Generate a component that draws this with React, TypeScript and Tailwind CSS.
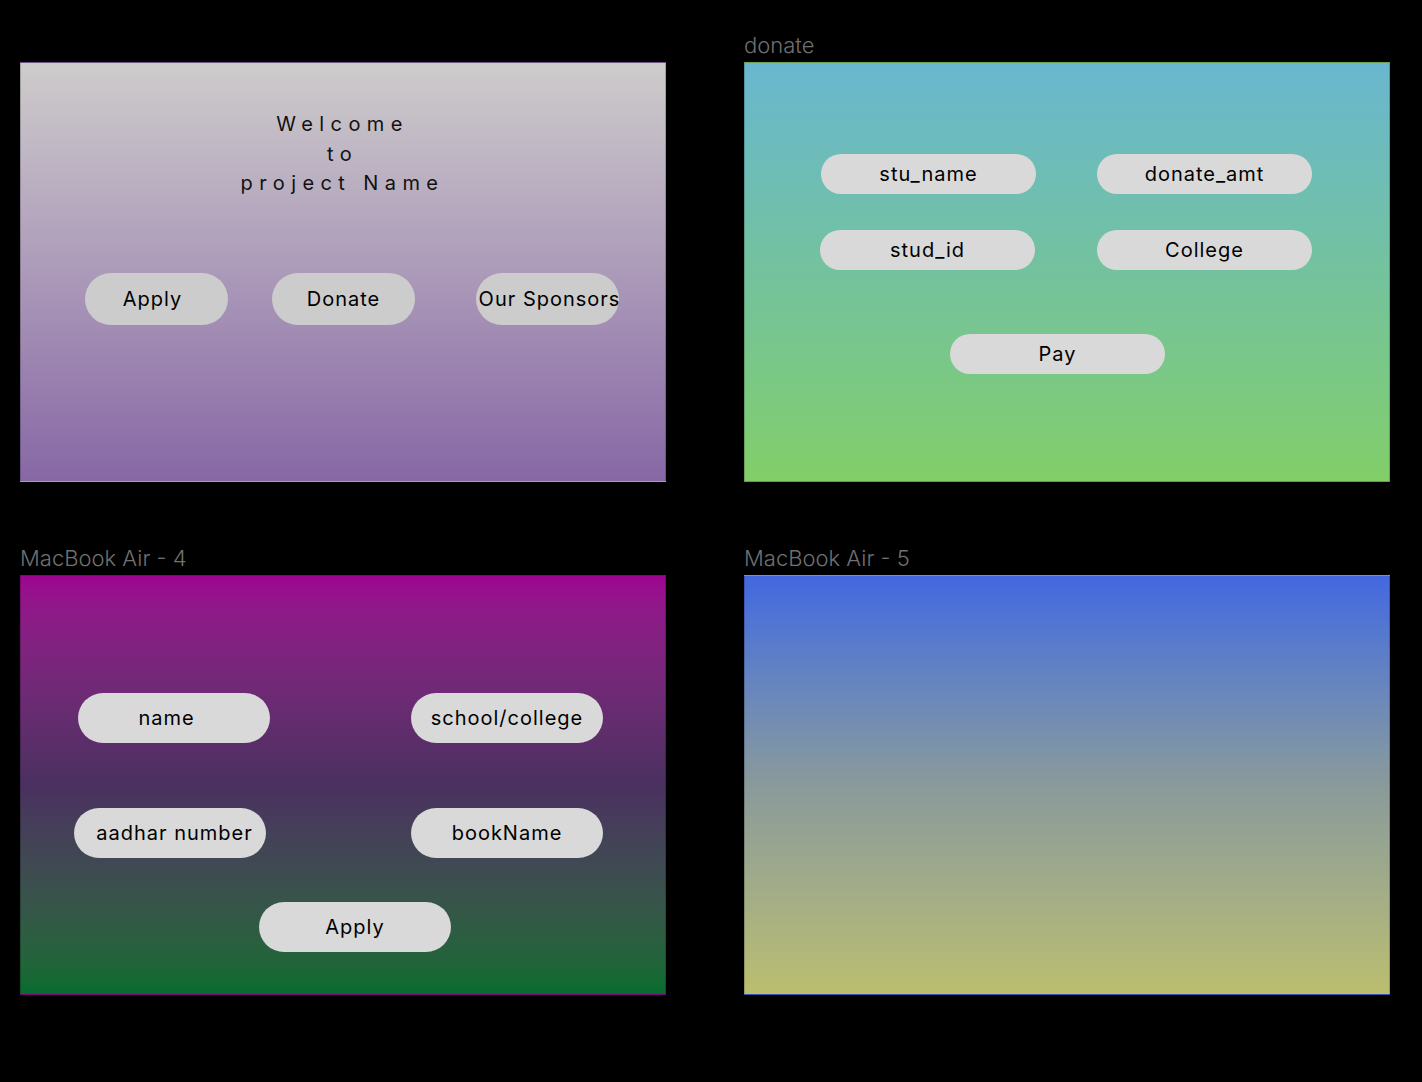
import React from 'react';

const font = { fontFamily: 'Inter, "Noto Sans", sans-serif' };

const Pill: React.FC<{ label: string; className: string }> = ({ label, className }) => (
  <div
    className={`flex items-center justify-center rounded-full text-[20px] tracking-[0.05em] text-black whitespace-nowrap ${className}`}
  >
    {label}
  </div>
);

const FrameLabel: React.FC<{ text: string }> = ({ text }) => (
  <div className="h-[31px] text-[22px] font-light leading-[28px] text-[#707070]">{text}</div>
);

const App: React.FC = () => {
  return (
    <div className="min-h-[1082px] w-[1422px] bg-black pt-[31px] pl-[20px]" style={font}>
      <div className="grid grid-cols-[646px_646px] gap-x-[78px] gap-y-[62px]">
        {/* Home */}
        <div>
          <FrameLabel text="" />
          <div className="h-[420px] border border-black/20 bg-gradient-to-b from-[#cecccb] via-[#ac9ab9] to-[#8767a5]">
            <div className="pt-[47px] pr-[1px] text-center text-[20px] leading-[29.5px] tracking-[0.32em] text-[#111]">
              <div>Welcome</div>
              <div>to</div>
              <div>project Name</div>
            </div>
            <div className="mt-[74px] flex">
              <Pill label="Apply" className="ml-[64px] h-[52px] w-[143px] bg-[#cccccc] pr-[8px]" />
              <Pill label="Donate" className="ml-[44px] h-[52px] w-[143px] bg-[#cccccc]" />
              <Pill
                label="Our Sponsors"
                className="ml-[61px] h-[52px] w-[143px] bg-[#cccccc] pl-[4px] tracking-[0.04em]"
              />
            </div>
          </div>
        </div>

        {/* donate */}
        <div>
          <FrameLabel text="donate" />
          <div className="h-[420px] border border-black/20 bg-gradient-to-b from-[#69b7cf] via-[#74c29d] to-[#82ce68]">
            <div className="mt-[91px] flex">
              <Pill label="stu_name" className="ml-[76px] h-[40px] w-[215px] bg-[#d9d9d9]" />
              <Pill label="donate_amt" className="ml-[61px] h-[40px] w-[215px] bg-[#d9d9d9]" />
            </div>
            <div className="mt-[36px] flex">
              <Pill label="stud_id" className="ml-[75px] h-[40px] w-[215px] bg-[#d9d9d9]" />
              <Pill label="College" className="ml-[62px] h-[40px] w-[215px] bg-[#d9d9d9]" />
            </div>
            <div className="mt-[64px] flex">
              <Pill label="Pay" className="ml-[205px] h-[40px] w-[215px] bg-[#d9d9d9]" />
            </div>
          </div>
        </div>

        {/* MacBook Air - 4 */}
        <div>
          <FrameLabel text="MacBook Air - 4" />
          <div className="h-[420px] border border-black/20 bg-gradient-to-b from-[#9c0590] via-[#4a3060] to-[#046c2e]">
            <div className="mt-[117px] flex">
              <Pill label="name" className="ml-[57px] h-[50px] w-[192px] bg-[#d9d9d9] pr-[15px]" />
              <Pill label="school/college" className="ml-[141px] h-[50px] w-[192px] bg-[#d9d9d9]" />
            </div>
            <div className="mt-[65px] flex">
              <Pill label="aadhar number" className="ml-[53px] h-[50px] w-[192px] bg-[#d9d9d9] pl-[9px]" />
              <Pill label="bookName" className="ml-[145px] h-[50px] w-[192px] bg-[#d9d9d9]" />
            </div>
            <div className="mt-[44px] flex">
              <Pill label="Apply" className="ml-[238px] h-[50px] w-[192px] bg-[#d9d9d9]" />
            </div>
          </div>
        </div>

        {/* MacBook Air - 5 */}
        <div>
          <FrameLabel text="MacBook Air - 5" />
          <div className="h-[420px] border border-black/20 bg-gradient-to-b from-[#4467e0] via-[#8a9a9a] to-[#bbbe6e]" />
        </div>
      </div>
    </div>
  );
};

export default App;
